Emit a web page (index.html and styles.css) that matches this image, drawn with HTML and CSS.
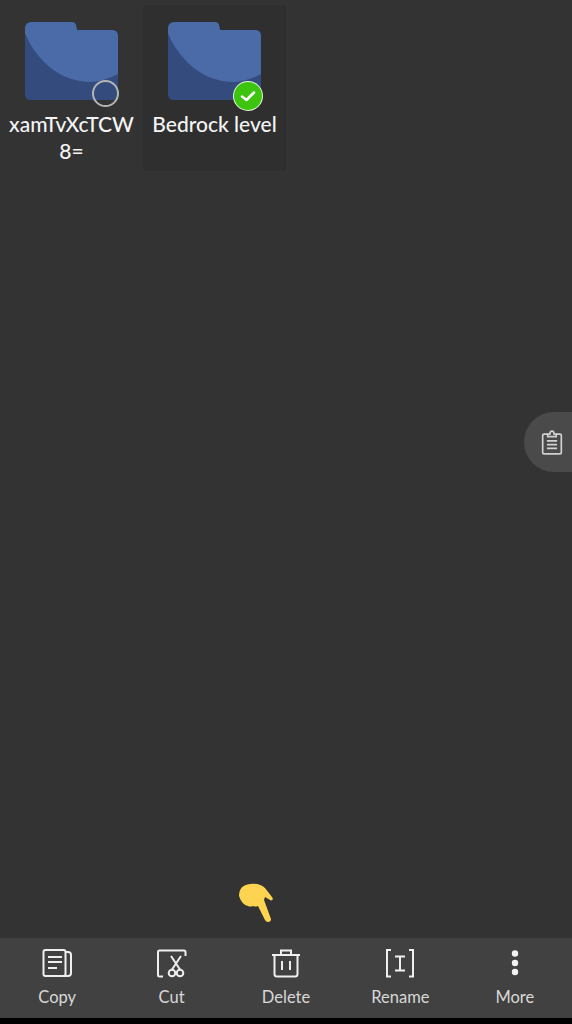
FILE: index.html
```html
<!DOCTYPE html>
<html lang="en">
<head>
    <meta charset="UTF-8">
    <meta name="viewport" content="width=device-width, initial-scale=1.0">
    <title>Files</title>
    <link rel="stylesheet" href="styles.css">
</head>
<body>
    <div class="screen">
        <div class="file-grid">
            <div class="tile">
                <div class="folder">
                    <svg width="93" height="79" viewBox="0 0 93 79">
                        <path fill="#344b7e" d="M7 0H47Q50 0 51 3L52 8H87Q93 8 93 14V72Q93 78 87 78H6Q0 78 0 72V7Q0 0 7 0Z"/>
                        <path fill="#4a6aa8" d="M7 0H47Q50 0 51 3L52 8H87Q93 8 93 14V52Q80 59 66 60Q40 60 20 41Q6 27 0 11V7Q0 0 7 0Z"/>
                    </svg>
                    <span class="mark mark-off"></span>
                </div>
                <div class="tile-name">xamTvXcTCW 8=</div>
            </div>
            <div class="tile tile-selected">
                <div class="folder">
                    <svg width="93" height="79" viewBox="0 0 93 79">
                        <path fill="#344b7e" d="M7 0H47Q50 0 51 3L52 8H87Q93 8 93 14V72Q93 78 87 78H6Q0 78 0 72V7Q0 0 7 0Z"/>
                        <path fill="#4a6aa8" d="M7 0H47Q50 0 51 3L52 8H87Q93 8 93 14V52Q80 59 66 60Q40 60 20 41Q6 27 0 11V7Q0 0 7 0Z"/>
                    </svg>
                    <span class="mark mark-on">
                        <svg width="28" height="28" viewBox="0 0 28 28">
                            <path fill="none" stroke="#fff" stroke-width="2.500" stroke-linecap="round" stroke-linejoin="round" d="M8 14.500L12.500 18L20 10.500"/>
                        </svg>
                    </span>
                </div>
                <div class="tile-name">Bedrock level</div>
            </div>
        </div>

        <div class="clip-tab">
            <svg width="22" height="29" viewBox="0 0 26 30" fill="none" stroke="#d0d0d0" stroke-width="2">
                <path d="M8 5H3.500Q2 5 2 6.500V27Q2 28.500 3.500 28.500H22.500Q24 28.500 24 27V6.500Q24 5 22.500 5H18"/>
                <path d="M8 8V5H10.500Q10.500 1.500 13 1.500Q15.500 1.500 15.500 5H18V8Z"/>
                <path d="M7 13H19M7 17.500H19M7 22H19"/>
            </svg>
        </div>

        <svg class="hand" width="36" height="42" viewBox="0 0 36 42">
            <path fill="#fdd352" d="M1 14Q1 3 12 2Q22 1 27 6L34 15Q36 18 33 18.500L27 15L26 18L33 37Q33 40 30 40Q28 40 27 38L20 24Q17 25 15 24Q12 25 10 24Q4 23 1 14Z"/>
        </svg>

        <div class="action-bar">
            <div class="action">
                <svg width="30" height="30" viewBox="0 0 30 30" fill="none" stroke="#efefef" stroke-width="2">
                    <rect x="1.500" y="2" width="22" height="26" rx="2"/>
                    <path d="M24 4H26Q29 4 29 7V25Q29 28 26 28H22"/>
                    <path d="M6 9H20M6 14H20M6 20H15"/>
                </svg>
                <span>Copy</span>
            </div>
            <div class="action">
                <svg width="30" height="30" viewBox="0 0 30 30" fill="none" stroke="#efefef" stroke-width="2">
                    <path d="M6 28.500H2.500Q1 28.500 1 27V4Q1 2.500 2.500 2.500H27Q28.500 2.500 28.500 4V8"/>
                    <path d="M14 8L23 21.500M24 8L15 21.500"/>
                    <circle cx="15" cy="25" r="3.300"/>
                    <circle cx="23" cy="25" r="3.300"/>
                </svg>
                <span>Cut</span>
            </div>
            <div class="action">
                <svg width="30" height="30" viewBox="0 0 30 30" fill="none" stroke="#efefef" stroke-width="2">
                    <path d="M1 7H29M10 7V2.500H20V7"/>
                    <path d="M3.500 7V26Q3.500 28.500 6 28.500H24Q26.500 28.500 26.500 26V7"/>
                    <path d="M11 13V22M19 13V22"/>
                </svg>
                <span>Delete</span>
            </div>
            <div class="action">
                <svg width="30" height="30" viewBox="0 0 30 30" fill="none" stroke="#efefef" stroke-width="2">
                    <path d="M6 2H2V28.500H6M24 2H28V28.500H24"/>
                    <path d="M10 8.500H20M10 22.500H20M15 8.500V22.500"/>
                </svg>
                <span>Rename</span>
            </div>
            <div class="action">
                <svg width="30" height="30" viewBox="0 0 30 30" fill="#f2f2f2">
                    <circle cx="15" cy="5.500" r="3.200"/>
                    <circle cx="15" cy="15" r="3.200"/>
                    <circle cx="15" cy="24" r="3.200"/>
                </svg>
                <span>More</span>
            </div>
        </div>
        <div class="nav-strip"></div>
    </div>
</body>
</html>
```

FILE: styles.css
```css
html, body {
    margin: 0;
    padding: 0;
}
body {
    font-family: "Lato", "Open Sans", sans-serif;
    background: #333333;
}
.screen {
    position: relative;
    display: flex;
    flex-direction: column;
    width: 572px;
    height: 1024px;
    overflow: hidden;
    background: #333333;
}
.file-grid {
    display: flex;
    flex: 1;
    align-items: flex-start;
    padding-top: 5px;
}
.tile {
    display: flex;
    flex-direction: column;
    align-items: center;
    box-sizing: border-box;
    width: 143px;
    height: 166px;
    padding-top: 17px;
}
.tile-selected {
    background: #2f2f2f;
}
.folder {
    position: relative;
    width: 93px;
    height: 79px;
}
.folder svg {
    display: block;
}
.mark {
    position: absolute;
    box-sizing: border-box;
    border-radius: 50%;
}
.mark-off {
    right: -1px;
    bottom: -6px;
    width: 27px;
    height: 27px;
    border: 2px solid #b5b5b5;
}
.mark-on {
    right: -1px;
    bottom: -9px;
    width: 28px;
    height: 28px;
    background: #3cc40e;
    box-shadow: 0 0 0 1px #e6f5de;
}
.tile-name {
    width: 125px;
    margin-top: 9px;
    color: #f4f4f4;
    font-size: 21px;
    font-weight: 500;
    line-height: 27px;
    text-align: center;
    word-break: break-all;
}
.clip-tab {
    position: absolute;
    top: 412px;
    right: 0;
    display: flex;
    align-items: center;
    box-sizing: border-box;
    width: 48px;
    height: 60px;
    padding-left: 17px;
    background: #4a4a4a;
    border-radius: 30px 0 0 30px;
}
.hand {
    position: absolute;
    top: 882px;
    left: 238px;
}
.action-bar {
    display: grid;
    grid-template-columns: repeat(5, 1fr);
    height: 80px;
    background: #414141;
}
.action {
    display: flex;
    flex-direction: column;
    align-items: center;
    gap: 9px;
    padding-top: 10px;
    color: #d8d8d8;
    font-size: 16.5px;
    line-height: 20px;
}
.action svg {
    display: block;
}
.nav-strip {
    height: 6px;
    background: #000000;
}
```
